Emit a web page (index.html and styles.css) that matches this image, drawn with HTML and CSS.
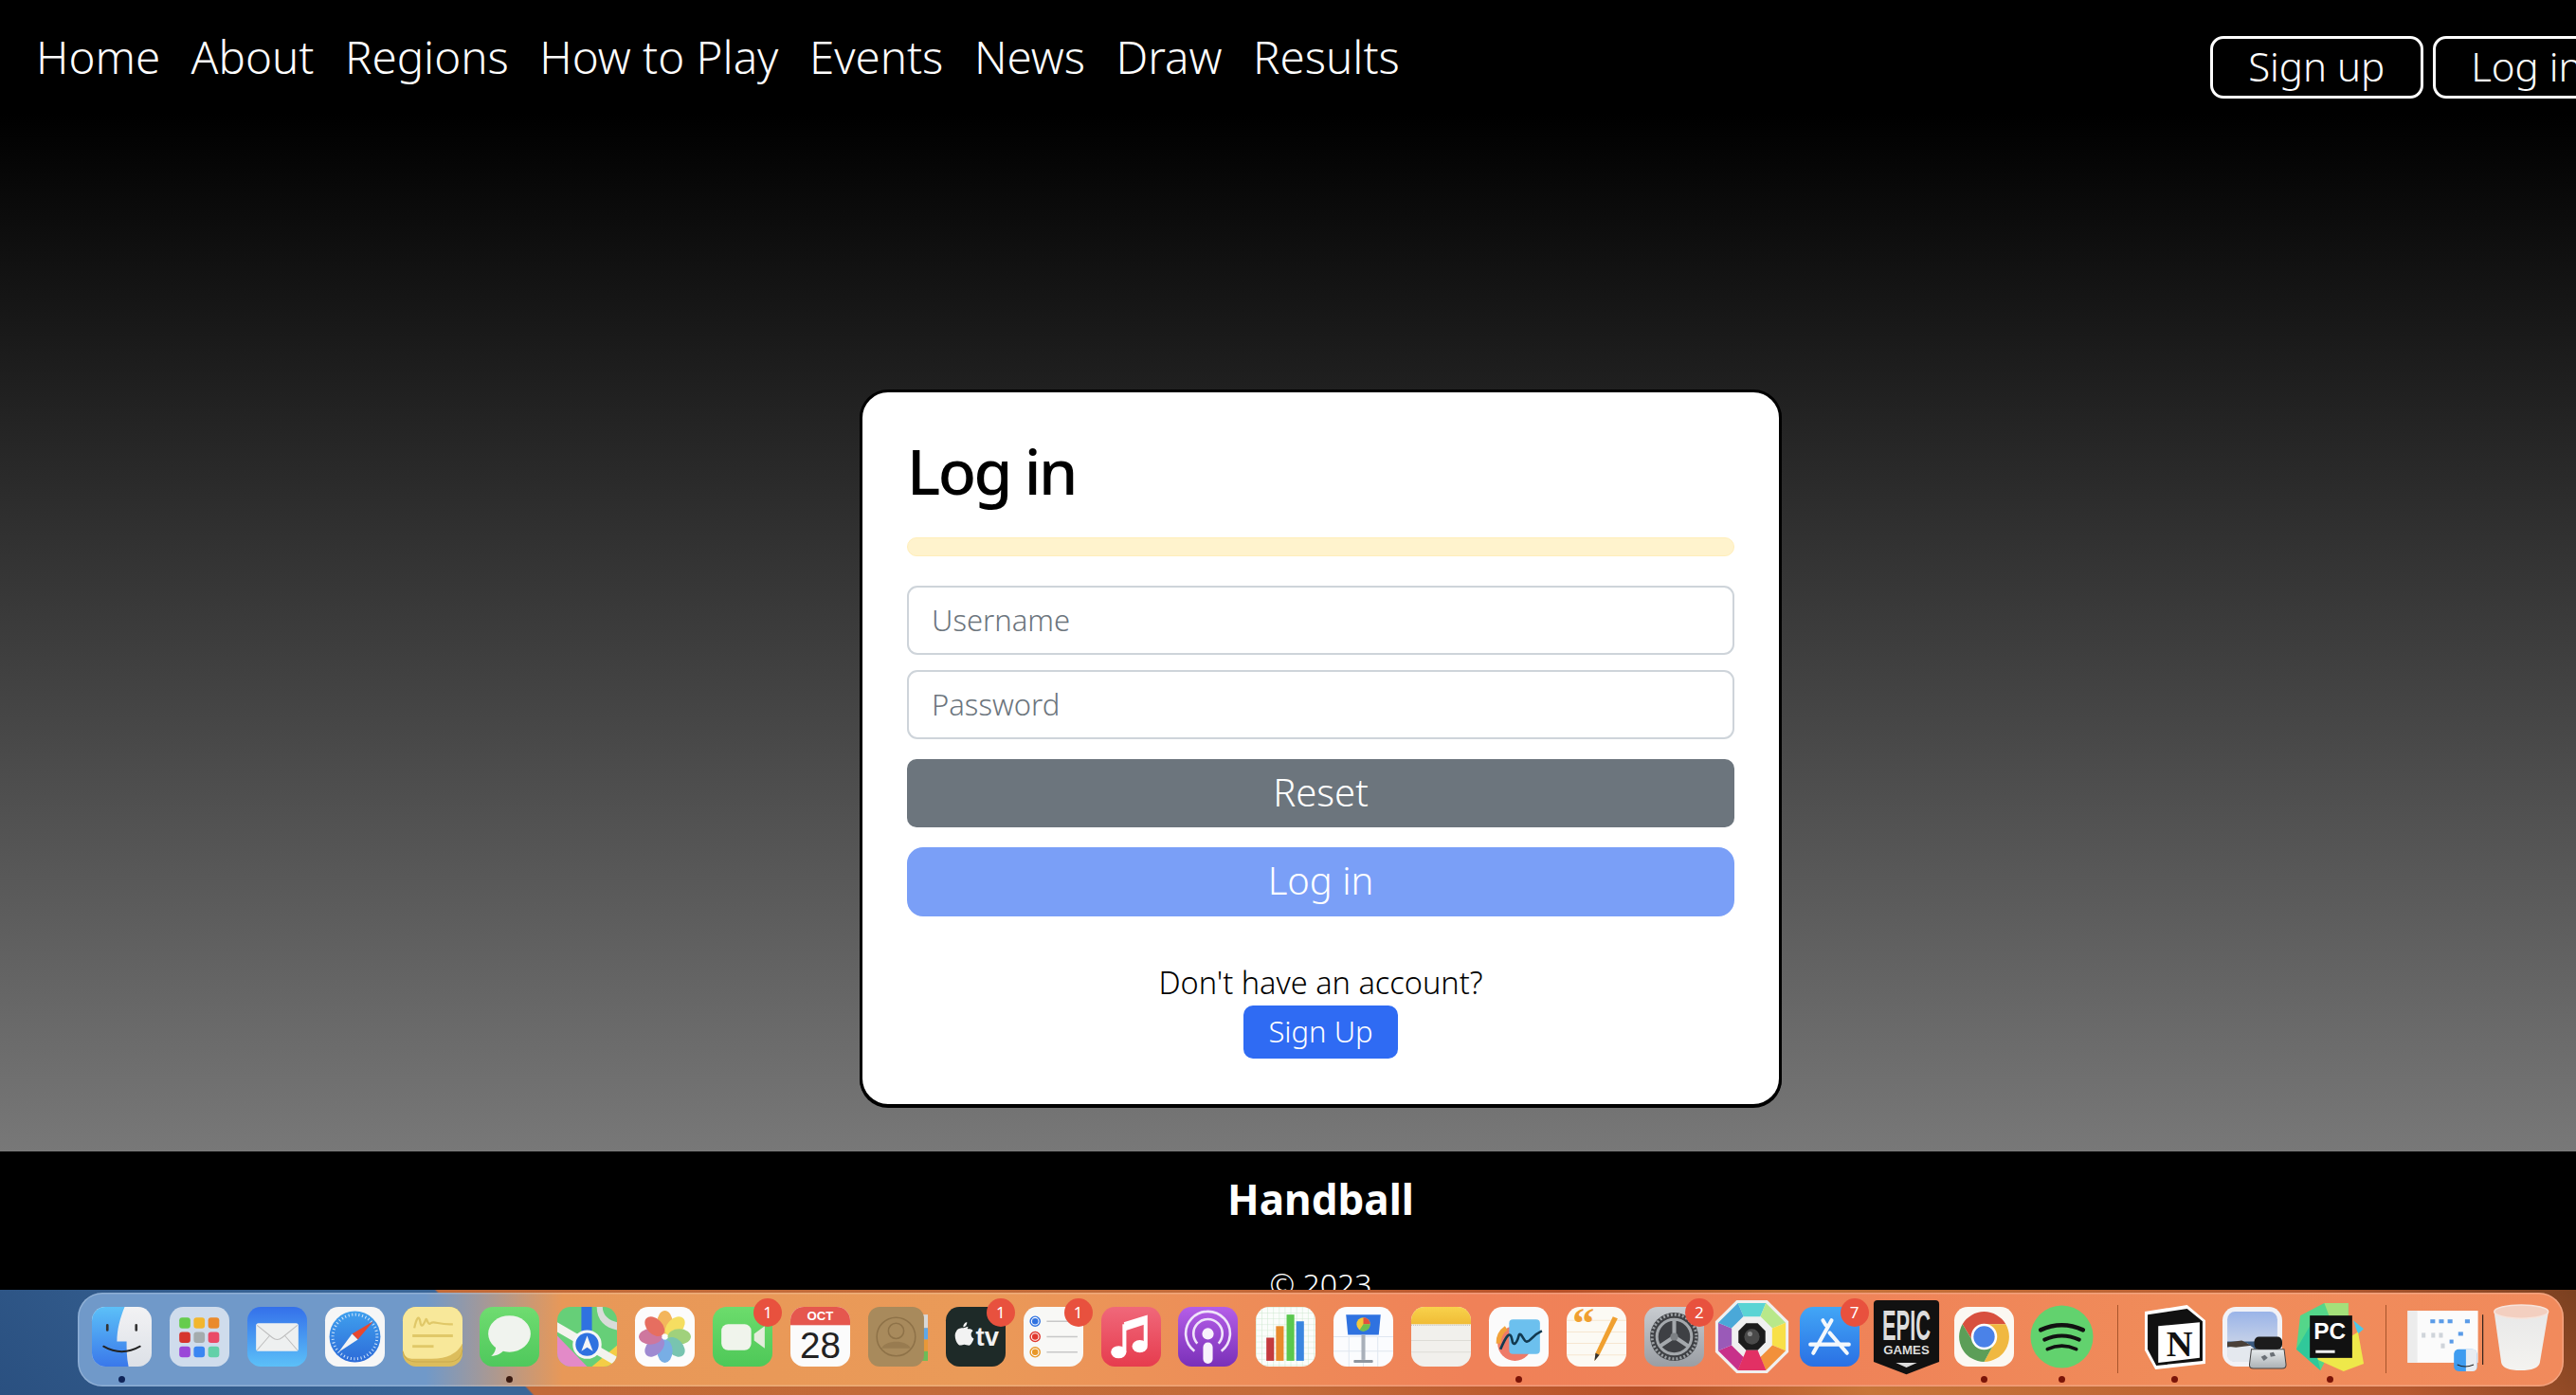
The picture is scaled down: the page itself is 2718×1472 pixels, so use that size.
FILE: index.html
```html
<!DOCTYPE html>
<html lang="en">
<head>
  <meta charset="UTF-8" />
  <meta name="viewport" content="width=device-width, initial-scale=1.0" />
  <title>Log in - Handball</title>
  <link rel="stylesheet" href="styles.css">
</head>
<body>

  <div class="window">
    <div class="page">
      <nav class="topbar">
        <div class="nav-links">
          <a href="#">Home</a>
          <a href="#">About</a>
          <a href="#">Regions</a>
          <a href="#">How to Play</a>
          <a href="#">Events</a>
          <a href="#">News</a>
          <a href="#">Draw</a>
          <a href="#">Results</a>
        </div>
        <div class="nav-auth">
          <a href="#" class="btn-outline">Sign up</a>
          <a href="#" class="btn-outline">Log in</a>
        </div>
      </nav>

      <main class="content">
        <div class="login-card">
          <h1>Log in</h1>
          <div class="alert-bar"></div>
          <form class="login-form" autocomplete="off">
            <input type="text" placeholder="Username">
            <input type="password" placeholder="Password">
            <button type="reset" class="btn-reset">Reset</button>
            <button type="submit" class="btn-login">Log in</button>
          </form>
          <div class="signup-row">
            <p>Don't have an account?</p>
            <a href="#" class="btn-signup">Sign Up</a>
          </div>
        </div>
      </main>

      <footer class="site-footer">
        <h2>Handball</h2>
        <p>© 2023</p>
      </footer>
    </div>
  </div>

  <div class="desktop">
    <div class="dock">

      <!-- finder -->
      <div class="dock-item">
        <svg viewBox="0 0 62 62">
          <defs>
            <linearGradient id="fin" x1="0" y1="0" x2="0" y2="1"><stop offset="0" stop-color="#5cc0f8"/><stop offset="1" stop-color="#3a78ea"/></linearGradient>
            <linearGradient id="finr" x1="0" y1="0" x2="0" y2="1"><stop offset="0" stop-color="#f2f2f4"/><stop offset="1" stop-color="#dde1e7"/></linearGradient>
          </defs>
          <rect width="62" height="62" rx="14" fill="url(#finr)"/>
          <path d="M14 0H34C29 12 26 24 26 36H36C36 44 36 53 38 62H14A14 14 0 0 1 0 48V14A14 14 0 0 1 14 0Z" fill="url(#fin)"/>
          <path d="M16 19V24M46 19V24" stroke="#333" stroke-width="2.6" stroke-linecap="round"/>
          <path d="M12 41Q31 52 50 41" stroke="#222" stroke-width="1.8" fill="none" stroke-linecap="round"/>
        </svg>
        <span class="dot dot-blue"></span>
      </div>

      <!-- launchpad -->
      <div class="dock-item">
        <svg viewBox="0 0 62 62">
          <rect width="62" height="62" rx="14" fill="#cfdcec"/>
          <rect x="10" y="11" width="11.500" height="11.500" rx="3" fill="#66cc4e"/>
          <rect x="25" y="11" width="11.500" height="11.500" rx="3" fill="#f2b62e"/>
          <rect x="40" y="11" width="11.500" height="11.500" rx="3" fill="#ea8a2c"/>
          <rect x="10" y="26" width="11.500" height="11.500" rx="3" fill="#d6342e"/>
          <rect x="25" y="26" width="11.500" height="11.500" rx="3" fill="#a4acae"/>
          <rect x="40" y="26" width="11.500" height="11.500" rx="3" fill="#ea4a66"/>
          <rect x="10" y="41" width="11.500" height="11.500" rx="3" fill="#9a48d8"/>
          <rect x="25" y="41" width="11.500" height="11.500" rx="3" fill="#3a86f2"/>
          <rect x="40" y="41" width="11.500" height="11.500" rx="3" fill="#62d0a8"/>
        </svg>
      </div>

      <!-- mail -->
      <div class="dock-item">
        <svg viewBox="0 0 62 62">
          <defs><linearGradient id="mail" x1="0" y1="0" x2="0" y2="1"><stop offset="0" stop-color="#3470ea"/><stop offset="1" stop-color="#5cc0f8"/></linearGradient></defs>
          <rect width="62" height="62" rx="14" fill="url(#mail)"/>
          <rect x="9" y="17" width="44" height="29" rx="2.500" fill="#eef0f0"/>
          <path d="M10 19L26 32Q31 36 36 32L52 19M10 45L23 30M52 45L39 30" stroke="#bdbdbd" stroke-width="1" fill="none"/>
        </svg>
      </div>

      <!-- safari -->
      <div class="dock-item">
        <svg viewBox="0 0 62 62">
          <defs><linearGradient id="saf" x1="0" y1="0" x2="0" y2="1"><stop offset="0" stop-color="#3fa0ee"/><stop offset="1" stop-color="#2d6bd8"/></linearGradient></defs>
          <rect width="62" height="62" rx="14" fill="#f6f6f6"/>
          <circle cx="31" cy="31" r="26.500" fill="url(#saf)"/>
          <circle cx="31" cy="31" r="23" fill="none" stroke="#cfe4fa" stroke-width="3" stroke-dasharray="1 2.600"/>
          <path d="M50 15L28 28L34 34Z" fill="#e8472e"/>
          <path d="M14 47L28 28L34 34Z" fill="#f4f4f4"/>
        </svg>
      </div>

      <!-- stickies -->
      <div class="dock-item">
        <svg viewBox="0 0 62 62">
          <rect width="62" height="62" rx="14" fill="#dcbd5c"/>
          <path d="M0 14A14 14 0 0 1 14 0H48A14 14 0 0 1 62 14V38Q54 54 30 54H12Q0 54 0 44Z" fill="#f8e89a"/>
          <path d="M0 46Q2 57 14 57H48Q60 57 62 44" stroke="#c9aa4c" stroke-width="1" fill="none"/>
          <path d="M12 22C14 12 17 8 18 15C19 22 21 20 24 13C25 11 26 20 29 17C32 14 38 19 52 18" stroke="#e0c868" stroke-width="2.200" fill="none"/>
          <path d="M10 30H52" stroke="#e0c868" stroke-width="2.800"/>
          <path d="M10 41H32" stroke="#e0c868" stroke-width="2.800"/>
        </svg>
      </div>

      <!-- messages -->
      <div class="dock-item">
        <svg viewBox="0 0 62 62">
          <defs><linearGradient id="msg" x1="0" y1="0" x2="0" y2="1"><stop offset="0" stop-color="#6fdc70"/><stop offset="1" stop-color="#4fc85c"/></linearGradient></defs>
          <rect width="62" height="62" rx="14" fill="url(#msg)"/>
          <ellipse cx="31" cy="28" rx="22" ry="19" fill="#f0f3ee"/>
          <path d="M17 40C17 45 15 49 12 51C18 51 23 48 25 45Z" fill="#f0f3ee"/>
        </svg>
        <span class="dot"></span>
      </div>

      <!-- maps -->
      <div class="dock-item">
        <svg viewBox="0 0 62 62">
          <defs><clipPath id="mapclip"><rect width="62" height="62" rx="14"/></clipPath></defs>
          <g clip-path="url(#mapclip)">
            <rect width="62" height="62" fill="#66cf78"/>
            <path d="M0 30L31 62H0Z" fill="#e38ac8"/>
            <path d="M36 62L62 40V62Z" fill="#f4cd46"/>
            <path d="M0 16L62 52V62L0 26Z" fill="#f3f3ee"/>
            <path d="M25 0H36V40H25Z" fill="#2f72e0"/>
            <path d="M41 0C41 14 50 22 62 24V16C54 14 47 9 47 0Z" fill="#d8dcd8"/>
            <circle cx="31" cy="39" r="15" fill="#f6f6f6"/>
            <circle cx="31" cy="39" r="12" fill="#2f72e0"/>
            <path d="M31 30L37 46L31 42L25 46Z" fill="#f6f6f6"/>
          </g>
        </svg>
      </div>

      <!-- photos -->
      <div class="dock-item">
        <svg viewBox="0 0 62 62">
          <rect width="62" height="62" rx="14" fill="#fcfcfc"/>
          <g opacity="0.82" transform="translate(31 31)">
            <ellipse cy="-15" rx="8" ry="12" fill="#f2a63a"/>
            <ellipse cy="-15" rx="8" ry="12" fill="#f4d840" transform="rotate(45)"/>
            <ellipse cy="-15" rx="8" ry="12" fill="#8cc860" transform="rotate(90)"/>
            <ellipse cy="-15" rx="8" ry="12" fill="#5cb8a0" transform="rotate(135)"/>
            <ellipse cy="-15" rx="8" ry="12" fill="#5c9ee0" transform="rotate(180)"/>
            <ellipse cy="-15" rx="8" ry="12" fill="#8a72c8" transform="rotate(225)"/>
            <ellipse cy="-15" rx="8" ry="12" fill="#c45a8a" transform="rotate(270)"/>
            <ellipse cy="-15" rx="8" ry="12" fill="#e2503e" transform="rotate(315)"/>
          </g>
        </svg>
      </div>

      <!-- facetime -->
      <div class="dock-item">
        <svg viewBox="0 0 62 62">
          <defs><linearGradient id="ft" x1="0" y1="0" x2="0" y2="1"><stop offset="0" stop-color="#6cdc6c"/><stop offset="1" stop-color="#4ec858"/></linearGradient></defs>
          <rect width="62" height="62" rx="14" fill="url(#ft)"/>
          <rect x="9" y="18" width="31" height="27" rx="7" fill="#f0f4ec"/>
          <path d="M43 28L54 20V43L43 35Z" fill="#e4ecdc"/>
        </svg>
        <span class="badge">1</span>
      </div>

      <!-- calendar -->
      <div class="dock-item">
        <svg viewBox="0 0 62 62">
          <defs><clipPath id="calclip"><rect width="62" height="62" rx="14"/></clipPath></defs>
          <rect width="62" height="62" rx="14" fill="#fbfbfb"/>
          <rect width="62" height="19" fill="#e5574e" clip-path="url(#calclip)"/>
          <text x="31" y="14" class="cal-month" text-anchor="middle">OCT</text>
          <text x="31" y="53" class="cal-day" text-anchor="middle">28</text>
        </svg>
      </div>

      <!-- contacts -->
      <div class="dock-item">
        <svg viewBox="0 0 62 62">
          <rect x="56" y="8" width="6" height="14" fill="#d8d8d8"/>
          <rect x="56" y="22" width="6" height="12" fill="#5fa8e8"/>
          <rect x="56" y="34" width="6" height="12" fill="#e89838"/>
          <rect x="56" y="46" width="6" height="10" fill="#6cbc58"/>
          <rect width="58" height="62" rx="12" fill="#a88a5c"/>
          <circle cx="29" cy="31" r="20" fill="none" stroke="#8e7248" stroke-width="1.500"/>
          <circle cx="29" cy="25" r="8" fill="none" stroke="#8e7248" stroke-width="1.500"/>
          <path d="M14 43C18 34 40 34 44 43" fill="#8e7248" opacity="0.6"/>
        </svg>
      </div>

      <!-- tv -->
      <div class="dock-item">
        <svg viewBox="0 0 62 62">
          <rect width="62" height="62" rx="14" fill="#1e2a28"/>
          <path d="M18 22C20 22 22 20 23 21C24 21 20 23 25 23C26 23 28 24 28 25C25 27 26 32 29 33C28 36 26 40 24 40C22 40 21 39 19 39C17 39 15 41 13 39C10 36 8 29 11 25C13 22 16 22 18 22ZM18 21C18 18 20 16 22 16C22 19 20 21 18 21Z" fill="#f2f2f2"/>
          <text x="31" y="40" class="tv-label">tv</text>
        </svg>
        <span class="badge">1</span>
      </div>

      <!-- reminders -->
      <div class="dock-item">
        <svg viewBox="0 0 62 62">
          <rect width="62" height="62" rx="14" fill="#f8f8f6"/>
          <circle cx="12" cy="15" r="5" fill="#fff" stroke="#2f72e0" stroke-width="1.400"/><circle cx="12" cy="15" r="3.200" fill="#2f72e0"/>
          <circle cx="12" cy="31" r="5" fill="#fff" stroke="#e0382e" stroke-width="1.400"/><circle cx="12" cy="31" r="3.200" fill="#e0382e"/>
          <circle cx="12" cy="47" r="5" fill="#fff" stroke="#e89828" stroke-width="1.400"/><circle cx="12" cy="47" r="3.200" fill="#e89828"/>
          <path d="M24 15H56M24 31H56M24 47H56" stroke="#c8c8c8" stroke-width="1.400"/>
        </svg>
        <span class="badge">1</span>
      </div>

      <!-- music -->
      <div class="dock-item">
        <svg viewBox="0 0 62 62">
          <defs><linearGradient id="mus" x1="0" y1="0" x2="0" y2="1"><stop offset="0" stop-color="#f0687a"/><stop offset="1" stop-color="#e63c4e"/></linearGradient></defs>
          <rect width="62" height="62" rx="14" fill="url(#mus)"/>
          <path d="M24 18L46 11V40" stroke="#fff" stroke-width="4" fill="none"/>
          <path d="M24 18V47" stroke="#fff" stroke-width="4"/>
          <path d="M24 17L46 10V18L24 25Z" fill="#fff"/>
          <ellipse cx="18" cy="47" rx="8" ry="6.500" fill="#fff"/>
          <ellipse cx="40" cy="41" rx="8" ry="6.500" fill="#fff"/>
        </svg>
      </div>

      <!-- podcasts -->
      <div class="dock-item">
        <svg viewBox="0 0 62 62">
          <defs><linearGradient id="pod" x1="0" y1="0" x2="0" y2="1"><stop offset="0" stop-color="#b45ee8"/><stop offset="1" stop-color="#7a30b8"/></linearGradient></defs>
          <rect width="62" height="62" rx="14" fill="url(#pod)"/>
          <path d="M17 46A23 23 0 1 1 45 46" stroke="#f0e4fa" stroke-width="2.600" fill="none"/>
          <path d="M20 38A15 15 0 1 1 42 38" stroke="#f0e4fa" stroke-width="2.600" fill="none"/>
          <circle cx="31" cy="28" r="6" fill="#f8f2fc"/>
          <rect x="26" y="37" width="10" height="22" rx="5" fill="#f8f2fc"/>
        </svg>
      </div>

      <!-- numbers -->
      <div class="dock-item">
        <svg viewBox="0 0 62 62">
          <defs><pattern id="numgrid" width="6" height="6" patternUnits="userSpaceOnUse"><path d="M6 0H0V6" stroke="#cde8cf" fill="none"/></pattern></defs>
          <rect width="62" height="62" rx="14" fill="#fbfdfb"/>
          <rect width="62" height="62" rx="14" fill="url(#numgrid)"/>
          <rect x="11" y="32" width="8" height="24" fill="#c43a3e"/>
          <rect x="21" y="20" width="8" height="36" fill="#e88a2c"/>
          <rect x="32" y="8" width="8" height="48" fill="#5ac84e"/>
          <rect x="42" y="15" width="8" height="41" fill="#3a86e0"/>
        </svg>
      </div>

      <!-- keynote -->
      <div class="dock-item">
        <svg viewBox="0 0 62 62">
          <rect width="62" height="62" rx="14" fill="#fbfcfe"/>
          <path d="M0 31H62M0 46H62M16 31V62M31 46V62M46 31V62" stroke="#dfe6f0"/>
          <path d="M13 8H49L47 29H15Z" fill="#2f72e0"/>
          <circle cx="31" cy="18" r="7" fill="#f2c83a"/>
          <path d="M31 18V11A7 7 0 0 1 38 18Z" fill="#e2503e"/>
          <path d="M31 18L38 18A7 7 0 0 1 27 24Z" fill="#6cc050"/>
          <rect x="29" y="29" width="4" height="26" fill="#a9b0ba"/>
          <rect x="21" y="55" width="20" height="3" rx="1" fill="#8e96a0"/>
        </svg>
      </div>

      <!-- notes -->
      <div class="dock-item">
        <svg viewBox="0 0 62 62">
          <defs>
            <linearGradient id="notetop" x1="0" y1="0" x2="0" y2="1"><stop offset="0" stop-color="#f8d24c"/><stop offset="1" stop-color="#f0bc36"/></linearGradient>
            <clipPath id="noteclip"><rect width="62" height="62" rx="14"/></clipPath>
          </defs>
          <rect width="62" height="62" rx="14" fill="#f1f0ec"/>
          <rect width="62" height="18" fill="url(#notetop)" clip-path="url(#noteclip)"/>
          <path d="M0 19H62" stroke="#b8b8b4" stroke-dasharray="1 1"/>
          <path d="M0 35H62M0 47H62" stroke="#dddcd6"/>
        </svg>
      </div>

      <!-- freeform -->
      <div class="dock-item">
        <svg viewBox="0 0 62 62">
          <rect width="62" height="62" rx="14" fill="#fbfbfb"/>
          <circle cx="27" cy="38" r="18" fill="#ee7a68"/>
          <path d="M18 22A18 18 0 0 0 10 38" stroke="#f2a23a" stroke-width="5" fill="none"/>
          <rect x="21" y="13" width="32" height="36" rx="4" fill="#6cc0ee"/>
          <path d="M12 44C18 30 22 24 24 34C25 42 29 38 31 30C33 24 36 36 39 36C43 37 44 30 55 25" stroke="#123a50" stroke-width="2.600" fill="none"/>
        </svg>
        <span class="dot dot-red"></span>
      </div>

      <!-- pages -->
      <div class="dock-item">
        <svg viewBox="0 0 62 62">
          <rect width="62" height="62" rx="14" fill="#fcfaf4"/>
          <path d="M0 14H62M0 26H62M0 38H62M0 50H62" stroke="#f6e6d0"/>
          <text x="6" y="32" class="pages-quote">“</text>
          <path d="M48 10L53 12L34 50L29 56L30 48Z" fill="#f0a030"/>
          <path d="M34 50L29 56L30 48Z" fill="#333"/>
        </svg>
      </div>

      <!-- settings -->
      <div class="dock-item">
        <svg viewBox="0 0 62 62">
          <defs><linearGradient id="sys" x1="0" y1="0" x2="0" y2="1"><stop offset="0" stop-color="#c8ccd0"/><stop offset="1" stop-color="#9a9ea4"/></linearGradient></defs>
          <rect width="62" height="62" rx="14" fill="url(#sys)"/>
          <circle cx="31" cy="31" r="25" fill="#3e4044"/>
          <circle cx="31" cy="31" r="23" fill="none" stroke="#9ca0a4" stroke-width="3" stroke-dasharray="2 2"/>
          <circle cx="31" cy="31" r="18" fill="none" stroke="#a4a8ac" stroke-width="3"/>
          <path d="M31 31V14M31 31L46 41M31 31L16 41" stroke="#a4a8ac" stroke-width="4"/>
          <circle cx="31" cy="31" r="4" fill="#7c8084"/>
        </svg>
        <span class="badge">2</span>
      </div>

      <!-- octagon app -->
      <div class="dock-item">
        <svg viewBox="0 0 62 62">
          <g transform="translate(31 31)">
            <path d="M-16 -38H16L38 -16V16L16 38H-16L-38 16V-16Z" fill="#f0f0f0"/>
            <path d="M-14.500 -35H14.500L0 0Z" fill="#5ad4d4"/>
            <path d="M14.500 -35L35 -14.500L0 0Z" fill="#b8e88a"/>
            <path d="M35 -14.500V14.500L0 0Z" fill="#f8e048"/>
            <path d="M35 14.500L14.500 35L0 0Z" fill="#f2903a"/>
            <path d="M14.500 35H-14.500L0 0Z" fill="#e23064"/>
            <path d="M-14.500 35L-35 14.500L0 0Z" fill="#c8308a"/>
            <path d="M-35 14.500V-14.500L0 0Z" fill="#9a5ab8"/>
            <path d="M-35 -14.500L-14.500 -35L0 0Z" fill="#4aa8d8"/>
            <path d="M-9 -21H9L21 -9V9L9 21H-9L-21 9V-9Z" fill="#f0f0f0"/>
            <path d="M-6 -14H6L14 -6V6L6 14H-6L-14 6V-6Z" fill="#1c1c1c"/>
            <path d="M-6 14H6L14.500 35H-14.500Z" fill="#e23064"/>
            <circle r="8" fill="#4a4a4a"/>
            <circle cx="-2" cy="-3" r="2.500" fill="#8a8a8a"/>
          </g>
        </svg>
      </div>

      <!-- app store -->
      <div class="dock-item">
        <svg viewBox="0 0 62 62">
          <defs><linearGradient id="app" x1="0" y1="0" x2="0" y2="1"><stop offset="0" stop-color="#42a6f6"/><stop offset="1" stop-color="#2a70e4"/></linearGradient></defs>
          <rect width="62" height="62" rx="14" fill="url(#app)"/>
          <path d="M33 14L14 48M24 14L27 19M31 27L49 48M11 39H51" stroke="#f4f8fc" stroke-width="4" stroke-linecap="round" fill="none"/>
        </svg>
        <span class="badge">7</span>
      </div>

      <!-- epic games -->
      <div class="dock-item">
        <svg viewBox="0 0 62 62">
          <path d="M1 -7H61Q65 -7 65 -3V57L31 70L-3 57V-3Q-3 -7 1 -7Z" fill="#111"/>
          <text transform="translate(31 34) scale(0.5 1)" class="epic-big" text-anchor="middle">EPIC</text>
          <text x="31" y="49" class="epic-small" text-anchor="middle">GAMES</text>
          <path d="M20 58H42L31 63Z" fill="#ddd"/>
        </svg>
      </div>

      <!-- chrome -->
      <div class="dock-item">
        <svg viewBox="0 0 62 62">
          <rect width="62" height="62" rx="14" fill="#fbf8f2"/>
          <path d="M8.500 18A26 26 0 0 1 53.500 18H31L20 37Z" fill="#d8503e"/>
          <path d="M53.500 18A26 26 0 0 1 31 57L42 37L31 18Z" fill="#f0b840"/>
          <path d="M31 57A26 26 0 0 1 8.500 18L20 37H42Z" fill="#5c9e58"/>
          <circle cx="31" cy="31" r="13.500" fill="#fff"/>
          <circle cx="31" cy="31" r="11" fill="#4a82e8"/>
        </svg>
        <span class="dot dot-red"></span>
      </div>

      <!-- spotify -->
      <div class="dock-item">
        <svg viewBox="0 0 62 62">
          <circle cx="31" cy="31" r="32.500" fill="#62d26e"/>
          <path d="M9 24Q31 14 53 24" stroke="#111" stroke-width="4.500" fill="none" stroke-linecap="round"/>
          <path d="M13 34Q31 26 49 34" stroke="#111" stroke-width="4" fill="none" stroke-linecap="round"/>
          <path d="M16 44Q31 37 46 44" stroke="#111" stroke-width="3.500" fill="none" stroke-linecap="round"/>
        </svg>
        <span class="dot dot-red"></span>
      </div>

      <span class="dock-divider"></span>

      <!-- notion -->
      <div class="dock-item">
        <svg viewBox="0 0 62 62">
          <path d="M0 5L44 -2L63 14V59L11 65L0 45Z" fill="#fff"/>
          <path d="M3 8L44 2L60 15V56L12 61L3 44Z" fill="#111"/>
          <path d="M14 20L57 16V53L14 58Z" fill="#fff"/>
          <text x="36" y="51" class="notion-n" text-anchor="middle">N</text>
        </svg>
        <span class="dot dot-red"></span>
      </div>

      <!-- preview -->
      <div class="dock-item">
        <svg viewBox="0 0 62 62">
          <defs>
            <linearGradient id="prev" x1="0" y1="0" x2="0" y2="1"><stop offset="0" stop-color="#9ab4e8"/><stop offset="0.6" stop-color="#c4d0e8"/></linearGradient>
            <linearGradient id="glass" x1="0" y1="0" x2="0" y2="1"><stop offset="0" stop-color="#e8ecee"/><stop offset="1" stop-color="#aab0b4"/></linearGradient>
          </defs>
          <rect width="62" height="62" rx="14" fill="#f2f2f6"/>
          <rect x="5" y="5" width="52" height="52" rx="8" fill="url(#prev)"/>
          <path d="M5 36H57V44H5Z" fill="#3a5a80"/>
          <path d="M5 42L26 38L34 44V57H13Q5 57 5 49Z" fill="#e4e8ee"/>
          <path d="M5 37L20 35L30 40L14 42L5 41Z" fill="#4a4038"/>
          <path d="M30 44H64L66 60Q66 64 62 64H32Q28 64 28 60Z" fill="url(#glass)" stroke="#444"/>
          <rect x="33" y="31" width="29" height="13" rx="5" fill="#1c1c1c"/>
          <path d="M40 52L44 50L47 53L43 56ZM49 48L53 47L55 51L50 52Z" fill="#6a7076"/>
        </svg>
      </div>

      <!-- pycharm -->
      <div class="dock-item">
        <svg viewBox="0 0 62 62">
          <path d="M0 9L25 -4L50 -4L50 9L21 66L-4 44Z" fill="#54d68a"/>
          <path d="M25 -4L50 -4V12L34 20Z" fill="#a4e07a"/>
          <path d="M55 14L66 23L60 28Z" fill="#4ac8e8"/>
          <path d="M16 54L60 26L66 59L45 67Z" fill="#eee84a"/>
          <path d="M-4 44L10 20L21 66Z" fill="#30c89a"/>
          <rect x="10" y="9" width="44" height="44" fill="#111"/>
          <text x="14" y="33" class="pc-label">PC</text>
          <rect x="16" y="45" width="20" height="3" fill="#eee"/>
        </svg>
        <span class="dot dot-red"></span>
      </div>

      <span class="dock-divider"></span>

      <!-- finder window thumbnail -->
      <div class="dock-item">
        <svg viewBox="0 0 62 62">
          <rect x="-5.500" y="4" width="73" height="54" fill="#fbfbfb"/>
          <rect x="-5.500" y="4" width="10" height="54" fill="#ececec"/>
          <path d="M72.500 8V60" stroke="#111"/>
          <g fill="#5a9be8">
            <rect x="18" y="13" width="5" height="4"/><rect x="27" y="13" width="5" height="4"/><rect x="36" y="13" width="5" height="4"/><rect x="54" y="13" width="5" height="4"/>
            <rect x="38" y="34" width="4" height="4"/><rect x="47" y="26" width="5" height="4"/>
          </g>
          <g fill="#cfd4da">
            <rect x="9" y="27" width="4" height="5"/><rect x="19" y="27" width="4" height="5"/><rect x="27" y="27" width="4" height="5"/><rect x="29" y="38" width="4" height="5"/>
          </g>
          <rect x="42.500" y="44" width="24" height="23" rx="5" fill="#3f9cf0"/>
          <path d="M55 44H61.500Q66.500 44 66.500 49V62Q66.500 67 61.500 67H55Z" fill="#e8ecf2"/>
          <path d="M46 60Q54 64 63 60" stroke="#222" fill="none"/>
        </svg>
      </div>

      <!-- trash -->
      <div class="dock-item">
        <svg viewBox="0 0 62 62">
          <defs><linearGradient id="trash" x1="0" y1="0" x2="0" y2="1"><stop offset="0" stop-color="#e8e8e8"/><stop offset="1" stop-color="#f4f3f0"/></linearGradient></defs>
          <path d="M3.500 5L11 58Q13 66 31 66Q49 66 51 58L60 5Z" fill="url(#trash)"/>
          <ellipse cx="31.750" cy="5" rx="28" ry="7" fill="#f3cfc0" stroke="#f6e4dc" stroke-width="1.500"/>
        </svg>
      </div>

    </div>
  </div>

</body>
</html>
```

FILE: styles.css
```css
* {
  box-sizing: border-box;
}

html,
body {
  margin: 0;
  height: 1472px;
  overflow: hidden;
}

body {
  font-family: "Noto Sans", sans-serif;
  background-color: #000;
}

.window {
  height: 1361px;
  overflow: hidden;
  border-bottom-left-radius: 12px;
  background-color: #000;
}

.page {
  width: 2787px;
}

/* top bar */
.topbar {
  height: 120px;
  display: flex;
  justify-content: space-between;
  align-items: flex-start;
  padding: 0 22px 0 38px;
  background-color: #000;
}

.nav-links {
  display: flex;
  gap: 32.5px;
  padding-top: 29px;
}

.nav-links a {
  color: #fff;
  text-decoration: none;
  font-size: 47.5px;
  font-weight: 300;
  line-height: 62px;
}

.nav-auth {
  display: flex;
  gap: 10px;
  padding-top: 38px;
}

.btn-outline {
  display: block;
  height: 66px;
  padding: 0 37.5px;
  border: 3px solid #fff;
  border-radius: 14px;
  color: #fff;
  text-decoration: none;
  font-size: 42px;
  font-weight: 300;
  line-height: 58px;
}

/* login card */
.content {
  height: 1095px;
  padding-top: 291px;
  background: linear-gradient(to bottom, #000, #787878);
}

.login-card {
  width: 973px;
  height: 757px;
  margin: 0 auto;
  padding: 43px 47px 0;
  background-color: #fff;
  border: 3px solid #000;
  border-radius: 30px;
  box-shadow: 0 1px 0 #000;
}

.login-card h1 {
  margin: 0 0 31px;
  font-size: 66px;
  font-weight: 500;
  letter-spacing: -2.5px;
  line-height: 79px;
  color: #000;
}

.alert-bar {
  height: 20px;
  margin-bottom: 31px;
  background-color: #fff3cd;
  border: 1px solid #ffeeba;
  border-radius: 10px;
}

.login-form {
  display: flex;
  flex-direction: column;
}

.login-form input {
  height: 73px;
  margin-bottom: 16px;
  padding: 0 24px 2px;
  border: 2px solid #ced4da;
  border-radius: 11px;
  font-family: "Noto Sans", sans-serif;
  font-size: 31px;
  font-weight: 350;
}

.login-form input::placeholder {
  color: #6c757d;
  opacity: 1;
}

.login-form button {
  height: 72px;
  padding: 0 0 4px;
  border: none;
  color: #fff;
  font-family: "Noto Sans", sans-serif;
  font-size: 40px;
  font-weight: 300;
}

.login-form .btn-reset {
  margin-top: 5px;
  background-color: #6c757d;
  border-radius: 10px;
}

.login-form .btn-login {
  height: 73px;
  margin-top: 21px;
  background-color: #7a9ff7;
  border-radius: 17px;
}

.signup-row {
  margin-top: 46px;
  text-align: center;
}

.signup-row p {
  margin: 0;
  font-size: 32.5px;
  font-weight: 350;
  line-height: 48px;
  color: #000;
}

.btn-signup {
  display: block;
  width: 163px;
  height: 56px;
  margin: 0 auto;
  background-color: #2f6bf3;
  border-radius: 10px;
  color: #fff;
  text-decoration: none;
  font-size: 31px;
  font-weight: 350;
  line-height: 54px;
}

/* footer */
.site-footer {
  height: 146px;
  background-color: #000;
  color: #fff;
  text-align: center;
}

.site-footer h2 {
  margin: 0;
  padding-top: 21px;
  font-size: 44px;
  font-weight: 700;
  line-height: 58px;
}

.site-footer p {
  margin: 0;
  padding-top: 39px;
  font-size: 32px;
  font-weight: 300;
  line-height: 44px;
}

/* desktop wallpaper and dock */
.desktop {
  height: 111px;
  padding: 3px 13px 9px 82px;
  background: linear-gradient(47deg, #2a5080 0%, #3a6698 16%, #3a6698 19.9%, #c26a38 20%, #c46c3a 48%, #b85028 62%, #c8763a 70%, #b85a30 90%, #7a4020 100%);
}

.dock {
  height: 99px;
  display: flex;
  align-items: flex-start;
  gap: 18.9px;
  padding: 15px 0 0 15px;
  background: linear-gradient(to right, #7099c9 0%, #7099c9 14%, #e89858 19.5%, #ea9a58 36%, #f08158 56%, #ef8258 70%, #f08c5a 85%, #f18a5c 100%);
  border-radius: 26px;
  box-shadow: inset 0 0 0 1.5px rgba(255, 255, 255, 0.22);
}

.dock-item {
  position: relative;
  flex: none;
  width: 63px;
  height: 63px;
}

.dock-item svg {
  display: block;
  width: 63px;
  height: 63px;
  overflow: visible;
}

.dock-divider {
  flex: none;
  width: 1px;
  height: 72px;
  margin: -2px 9px 0 8px;
  background-color: #a8552c;
}

.dot {
  position: absolute;
  left: 28px;
  bottom: -16.5px;
  width: 7px;
  height: 7px;
  border-radius: 50%;
  background-color: #3a1a10;
}

.dot-blue {
  background-color: #0f2458;
}

.dot-red {
  background-color: #7a1408;
}

.badge {
  position: absolute;
  top: -9px;
  right: -10px;
  width: 30px;
  height: 30px;
  border-radius: 50%;
  background-color: #e8513e;
  color: #fff;
  text-align: center;
  font-size: 17px;
  line-height: 30px;
}

/* text inside the dock icons */
.cal-month {
  font: 700 13px "Liberation Sans", sans-serif;
  fill: #fff;
}

.cal-day {
  font: 400 38px "Liberation Sans", sans-serif;
  fill: #222;
}

.tv-label {
  font: 700 27px "Liberation Sans", sans-serif;
  fill: #f2f2f2;
}

.pages-quote {
  font: 700 46px "Liberation Serif", serif;
  fill: #f0a030;
}

.epic-big {
  font: 700 43px "Liberation Sans", sans-serif;
  fill: #ddd;
}

.epic-small {
  font: 700 13px "Liberation Sans", sans-serif;
  fill: #ddd;
}

.notion-n {
  font: 700 38px "Liberation Serif", serif;
  fill: #111;
}

.pc-label {
  font: 700 24px "Liberation Sans", sans-serif;
  fill: #fff;
}
```
